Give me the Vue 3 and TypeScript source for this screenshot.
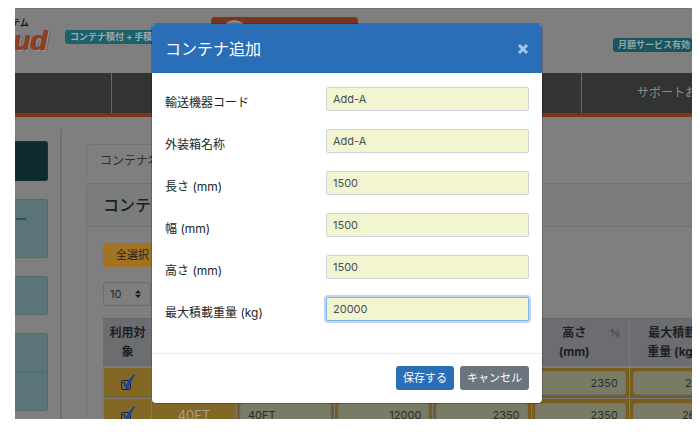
<script setup lang="ts">
import { reactive, ref } from 'vue'

interface Field {
  id: string
  label: string
  value: string
  active?: boolean
}

interface ContainerRow {
  use: boolean
  code: string
  name: string
  dims: string[]
}

const fields = reactive<Field[]>([
  { id: 'code', label: '輸送機器コード', value: 'Add-A' },
  { id: 'name', label: '外装箱名称', value: 'Add-A' },
  { id: 'length', label: '長さ (mm)', value: '1500' },
  { id: 'width', label: '幅 (mm)', value: '1500' },
  { id: 'height', label: '高さ (mm)', value: '1500' },
  { id: 'payload', label: '最大積載重量 (kg)', value: '20000', active: true },
])

const columns: string[][] = [
  ['コード'],
  ['名称'],
  ['長さ', '(mm)'],
  ['幅', '(mm)'],
  ['高さ', '(mm)'],
  ['最大積載', '重量 (kg)'],
]

const rows = reactive<ContainerRow[]>([
  { use: true, code: '20FT', name: '20FT', dims: ['5900', '2350', '2350', '21700'] },
  { use: true, code: '40FT', name: '40FT', dims: ['12000', '2350', '2350', '26500'] },
])

const pageSize = ref('10')
</script>

<template>
  <div class="window">
    <div class="page">
      <header class="top">
        <div class="brand">
          <span class="brand-sub">テム</span>
          <span class="brand-name">ud</span>
        </div>
        <span class="badge badge-left">コンテナ積付 + 手積</span>
        <div class="promo"><span class="promo-dot"></span></div>
        <div class="slot"></div>
        <span class="badge badge-right">月額サービス有効</span>
      </header>

      <nav class="nav">
        <span></span>
        <span></span>
        <a href="#">サポートお</a>
      </nav>

      <div class="columns">
        <aside class="side">
          <div class="tile tile-dark"></div>
          <div class="tile tile-tall">ー</div>
          <div class="tile"></div>
          <div class="tile tile-split"><span></span><span></span></div>
        </aside>

        <main class="main">
          <div class="tab">コンテナ名</div>
          <section class="card">
            <h2 class="card-title">コンテナ</h2>
            <div class="card-body">
              <button type="button" class="select-all">全選択</button>
              <div class="pager">
                <select v-model="pageSize" aria-label="表示件数">
                  <option>10</option>
                  <option>25</option>
                </select>
                <svg class="caret" viewBox="0 0 6 8" aria-hidden="true">
                  <path d="M3 0 6 3.3H0zM3 8 0 4.7h6z" />
                </svg>
              </div>
              <table class="grid">
                <colgroup>
                  <col class="c-use" />
                  <col class="c-code" />
                  <col v-for="n in 5" :key="n" class="c-val" />
                </colgroup>
                <thead>
                  <tr>
                    <th class="th-use">利用対<br />象</th>
                    <th v-for="(col, i) in columns" :key="i">
                      <div class="head">
                        <span><template v-for="(line, j) in col" :key="j"><br v-if="j" />{{ line }}</template></span>
                        <svg class="sort" viewBox="0 0 12 10" aria-hidden="true">
                          <path d="M.8 4.200 3.500 1.500V8.500M3.500 1.500 8.500 8.500V1.500M8.500 8.500 11.200 5.800" />
                        </svg>
                      </div>
                    </th>
                  </tr>
                </thead>
                <tbody>
                  <tr v-for="row in rows" :key="row.code">
                    <td class="td-use">
                      <label class="check">
                        <input v-model="row.use" type="checkbox" :aria-label="row.code" />
                        <svg v-if="row.use" viewBox="0 0 15 16" aria-hidden="true">
                          <path d="M1 8.500 3.200 7.500 5.800 10.500C7.500 6.500 9.500 3.200 12 .8L14.500.6C11.500 4.600 9.200 9.500 7.200 15L5 15.200C4 12.500 2.700 10.300 1 8.500Z" />
                        </svg>
                      </label>
                    </td>
                    <td class="td-code">{{ row.code }}</td>
                    <td><input v-model="row.name" class="cell" type="text" :aria-label="row.code + ' 名称'" /></td>
                    <td v-for="(_, d) in row.dims" :key="d">
                      <input v-model="row.dims[d]" class="cell num" type="text" :aria-label="row.code + ' ' + columns[d + 2].join('')" />
                    </td>
                  </tr>
                </tbody>
              </table>
            </div>
          </section>
        </main>
      </div>
    </div>

    <div class="overlay">
      <form class="modal" role="dialog" aria-labelledby="dialog-title" @submit.prevent>
        <div class="modal-head">
          <h1 id="dialog-title">コンテナ追加</h1>
          <button type="button" class="close" aria-label="閉じる">
            <svg viewBox="0 0 12 12" aria-hidden="true"><path d="M2 2 10 10M10 2 2 10" /></svg>
          </button>
        </div>
        <div class="modal-body">
          <div v-for="f in fields" :key="f.id" class="field">
            <label :for="f.id">{{ f.label }}</label>
            <input :id="f.id" v-model="f.value" type="text" :class="{ active: f.active }" />
          </div>
        </div>
        <div class="modal-foot">
          <button type="submit" class="btn save">保存する</button>
          <button type="button" class="btn cancel">キャンセル</button>
        </div>
      </form>
    </div>
  </div>
</template>

<style>
body {
  margin: 0;
  background: #fff;
}
</style>

<style scoped>
* {
  box-sizing: border-box;
}

.window {
  position: relative;
  height: calc(100vh - 21px);
  margin: 8px 8px 13px 15px;
  overflow: hidden;
  background: #7f7f7f;
  color: #1d2022;
  font-family: Inter, "Noto Sans CJK JP", sans-serif;
  font-size: 12px;
}

input,
select,
button {
  font-family: inherit;
}

/* Header */
.top {
  display: flex;
  align-items: flex-start;
  height: 65px;
  border-top: 1px solid #757575;
}

.brand {
  display: flex;
  flex-direction: column;
  width: 50px;
  margin-left: -4px;
  padding-top: 8px;
}

.brand-sub {
  color: #1c1c1c;
  font-size: 9px;
  font-weight: 700;
  line-height: 11px;
}

.brand-name {
  padding-left: 2px;
  color: #8c3f22;
  font-family: "Liberation Sans", sans-serif;
  font-size: 28px;
  font-style: italic;
  font-weight: 700;
  line-height: 26px;
  text-shadow: 1px 0 0 #8c3f22, 2px 1px 0 #999, 3px 1px 0 #626262;
}

.badge {
  height: 14px;
  padding: 0 5px;
  border-radius: 3px;
  font-size: 9px;
  font-weight: 700;
  line-height: 14px;
  white-space: nowrap;
}

.badge-left {
  width: 130px;
  margin: 21px 0 0 4px;
  background: #1c626b;
  color: #a4abac;
}

.badge-right {
  width: 79px;
  margin: 29px 0 0 auto;
  background: #17565f;
  color: #96a3a4;
}

.promo {
  width: 147px;
  height: 40px;
  margin: 8px 0 0 16px;
  padding: 3px 11px;
  border-radius: 4px;
  background: #7a341c;
}

.promo-dot {
  display: block;
  width: 25px;
  height: 25px;
  border-radius: 50%;
  background: #8a827c;
}

.slot {
  width: 64px;
  height: 20px;
  margin: 15px 0 0 85px;
  background: #6b6967;
}

/* Navigation */
.nav {
  display: grid;
  grid-template-columns: 97px 1fr 110px;
  height: 44px;
  border-bottom: 4px solid #7c361c;
  background: #323432;
}

.nav span {
  border-right: 1px solid #686868;
}

.nav a {
  padding-left: 55px;
  color: #8b8b8b;
  font-size: 12px;
  line-height: 39px;
  text-decoration: none;
  white-space: nowrap;
}

/* Columns */
.columns {
  display: flex;
}

.side {
  display: flex;
  flex-direction: column;
  flex: none;
  gap: 18px;
  width: 33px;
  padding-top: 24px;
}

.tile {
  height: 39px;
  border: 1px solid #4d6b70;
  border-left: 0;
  border-radius: 0 3px 3px 0;
  background: #5b7478;
}

.tile-dark {
  height: 40px;
  border-color: #12343a;
  background: #0c2a30;
}

.tile-tall {
  height: 59px;
  padding-top: 11px;
  color: #2a4c52;
  font-weight: 700;
  line-height: 18px;
}

.tile-split {
  display: grid;
  height: 78px;
}

.tile-split span + span {
  border-top: 1px solid #4d6b70;
}

.main {
  flex: 1;
  min-width: 0;
  margin: 12px 0 0 12px;
  padding: 15px 0 0 24px;
  border-left: 2px solid #6f6f6f;
}

.tab {
  width: 120px;
  height: 33px;
  padding-left: 13px;
  border: 1px solid #747474;
  border-bottom: 0;
  border-radius: 4px 4px 0 0;
  color: #2b2e30;
  line-height: 32px;
  white-space: nowrap;
}

.card {
  margin-top: 6px;
  border: 1px solid #727373;
  border-right: 0;
  border-radius: 3px 0 0 0;
}

.card-title {
  margin: 0;
  padding-left: 16px;
  border-bottom: 1px solid #707171;
  background: #7b7c7c;
  font-size: 16px;
  font-weight: 500;
  line-height: 42px;
}

.card-body {
  padding: 16px 0 0 16px;
}

.select-all {
  display: block;
  width: 66px;
  height: 24px;
  padding: 0 0 0 13px;
  border: 0;
  border-radius: 3px;
  background: #a17424;
  color: #1d2022;
  font-size: 11px;
  line-height: 24px;
  text-align: left;
}

.pager {
  position: relative;
  width: 48px;
  margin: 15px 0 12px;
}

.pager select {
  display: block;
  width: 100%;
  height: 24px;
  padding: 0 6px;
  border: 1px solid #6a6c6e;
  border-radius: 3px;
  appearance: none;
  background: #7f7f7f;
  color: #25282b;
  font-size: 11px;
}

.caret {
  position: absolute;
  top: 8px;
  right: 10px;
  width: 6px;
  height: 8px;
  fill: #1b1e20;
}

/* Table */
.grid {
  width: 625px;
  border-collapse: collapse;
  table-layout: fixed;
}

.c-use {
  width: 48px;
}

.c-code {
  width: 85px;
}

.grid th {
  height: 48px;
  padding: 4px 8px;
  border: 1px solid #77797b;
  border-top-color: #666;
  border-bottom: 2px solid #7b7c7e;
  background: #6b6d70;
  font-size: 12px;
  font-weight: 700;
  line-height: 19px;
  vertical-align: top;
}

.grid .th-use {
  padding: 4px 0;
  border-left-color: #6b6d70;
}

.head {
  display: flex;
  justify-content: space-between;
  white-space: nowrap;
}

.head span {
  flex: 1;
}

.sort {
  flex: none;
  width: 12px;
  height: 10px;
  margin-top: 5px;
  fill: none;
  stroke: #505255;
  stroke-width: 1.3;
}

.grid td {
  height: 32px;
  padding: 0 3px;
  border: 1px solid #77797b;
  background: #7a5c1f;
}

.grid .td-use,
.grid .td-code {
  background: #836726;
  text-align: center;
}

.grid .td-code {
  color: #a5a092;
  font-size: 13px;
}

.cell {
  display: block;
  width: 100%;
  height: 24px;
  padding: 0 7px;
  border: 1px solid #6f7275;
  border-radius: 3px;
  background: #7a7b65;
  color: #2b2d2c;
  font-size: 11px;
}

.num {
  text-align: right;
}

.check {
  position: relative;
  display: block;
  width: 14px;
  height: 16px;
  margin: 0 auto 2px;
}

.check input {
  position: absolute;
  top: 6px;
  left: 0;
  width: 10px;
  height: 10px;
  margin: 0;
  border: 1px solid #222;
  border-radius: 2px;
  appearance: none;
}

.check svg {
  position: absolute;
  top: 0;
  left: 0;
  width: 15px;
  height: 16px;
  fill: #1c459c;
}

/* Dialog */
.overlay {
  position: absolute;
  inset: 0;
  padding: 16px 13px 0 0;
}

.modal {
  width: 390px;
  margin: 0 auto;
  overflow: hidden;
  border-radius: 4px;
  background: #fff;
  box-shadow: 0 0 0 1px rgba(0, 0, 0, 0.2);
}

.modal-head {
  display: flex;
  align-items: center;
  justify-content: space-between;
  height: 49px;
  padding: 0 13px;
  background: #2a6eb8;
}

.modal-head h1 {
  margin: 0;
  color: #fff;
  font-size: 16px;
  font-weight: 400;
  line-height: 24px;
}

.close {
  width: 12px;
  height: 12px;
  padding: 0;
  border: 0;
  background: none;
}

.close svg {
  display: block;
  width: 12px;
  height: 12px;
  fill: none;
  stroke: #a6c8ed;
  stroke-width: 3;
}

.modal-body {
  display: flex;
  flex-direction: column;
  gap: 18px;
  padding: 14px 13px 32px;
}

.field {
  display: grid;
  grid-template-columns: 161px 1fr;
  height: 24px;
}

.field label {
  padding-top: 6px;
  color: #212529;
  font-size: 12px;
  line-height: 20px;
}

.field input {
  width: 100%;
  min-width: 0;
  height: 24px;
  padding: 0 6px;
  border: 1px solid #ced4da;
  border-radius: 2px;
  outline: 0;
  background: #f2f5d0;
  color: #495057;
  font-size: 11px;
}

.field input.active,
.field input:focus {
  border-color: #80b4f0;
  box-shadow: 0 0 0 2px #bfd6f2;
}

.modal-foot {
  display: flex;
  justify-content: flex-end;
  gap: 6px;
  padding: 12px 13px 13px;
  border-top: 1px solid #e9ecef;
}

.btn {
  height: 24px;
  padding: 0 7px;
  border: 0;
  border-radius: 3px;
  color: #fff;
  font-size: 11px;
  line-height: 24px;
}

.save {
  background: #2a6eb8;
}

.cancel {
  background: #6c757d;
}
</style>
